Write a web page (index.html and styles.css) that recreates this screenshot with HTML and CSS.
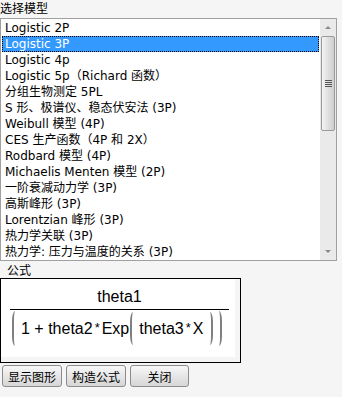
FILE: index.html
```html
<!DOCTYPE html>
<html lang="zh-CN">
<head>
  <meta charset="UTF-8">
  <title>选择模型</title>
  <link rel="stylesheet" href="styles.css">
</head>
<body>
  <div class="label">选择模型</div>
  <div class="listbox">
    <ul class="items">
      <li>Logistic 2P</li>
      <li class="selected">Logistic 3P</li>
      <li>Logistic 4p</li>
      <li>Logistic 5p（Richard 函数）</li>
      <li>分组生物测定 5PL</li>
      <li>S 形、极谱仪、稳态伏安法 (3P)</li>
      <li>Weibull 模型 (4P)</li>
      <li>CES 生产函数（4P 和 2X）</li>
      <li>Rodbard 模型 (4P)</li>
      <li>Michaelis Menten 模型 (2P)</li>
      <li>一阶衰减动力学 (3P)</li>
      <li>高斯峰形 (3P)</li>
      <li>Lorentzian 峰形 (3P)</li>
      <li>热力学关联 (3P)</li>
      <li>热力学: 压力与温度的关系 (3P)</li>
    </ul>
    <div class="scrollbar">
      <div class="arrow up"></div>
      <div class="thumb"><span class="grip"></span></div>
      <div class="track"></div>
      <div class="arrow down"></div>
    </div>
  </div>

  <div class="label formula-label">公式</div>
  <div class="formula-box">
    <div class="formula">
      <div class="numer">theta1</div>
      <div class="denom">
        <span class="paren open"></span>
        <span class="term first">1 + theta2<span class="op">*</span>Exp</span>
        <span class="paren open inner"></span>
        <span class="term second">theta3<span class="op">*</span>X</span>
        <span class="paren close inner"></span>
        <span class="paren close"></span>
      </div>
    </div>
  </div>

  <div class="buttons">
    <button>显示图形</button>
    <button>构造公式</button>
    <button class="wide">关闭</button>
  </div>
</body>
</html>
```

FILE: styles.css
```css
body {
  margin: 0;
  background-color: #f5f5f5;
  color: #000000;
  font-family: "DejaVu Sans", "Noto Sans CJK SC", sans-serif;
  font-size: 12px;
}
.label {
  height: 18px;
  line-height: 16px;
  font-family: "Noto Sans CJK SC", sans-serif;
}
.listbox {
  display: flex;
  width: 335px;
  height: 241px;
  border: 1px solid #a0a0a0;
  background-color: #ffffff;
}
.items {
  flex: 1;
  list-style: none;
  margin: 0;
  padding: 1px 1px 0 1px;
}
.items li {
  height: 16px;
  line-height: 16px;
  padding-left: 3px;
  white-space: nowrap;
}
.items li.selected {
  background-color: #3399ff;
  color: #ffffff;
  outline: 1px dotted #000000;
  outline-offset: -1px;
}
/* Scroll bar */
.scrollbar {
  width: 16px;
  display: flex;
  flex-direction: column;
  background-color: #eaeaea;
}
.arrow {
  height: 17px;
  position: relative;
}
.arrow::after {
  content: '';
  position: absolute;
  left: 5px;
  width: 0;
  height: 0;
  border-left: 3px solid transparent;
  border-right: 3px solid transparent;
}
.arrow.up::after {
  top: 7px;
  border-bottom: 3px solid #8a8a8a;
}
.arrow.down::after {
  top: 7px;
  border-top: 3px solid #8a8a8a;
}
.thumb {
  height: 93px;
  margin: 0 1px;
  border: 1px solid #9a9a9a;
  border-radius: 2px;
  background: linear-gradient(to right, #f4f4f4, #dcdcdc 60%, #cfcfcf);
  display: flex;
  align-items: center;
  justify-content: center;
}
.grip {
  width: 7px;
  height: 7px;
  background: repeating-linear-gradient(to bottom, #555555 0 1px, transparent 1px 2px);
}
.track {
  flex: 1;
}
/* Formula */
.formula-label {
  padding-left: 7px;
  height: 17px;
  line-height: 18px;
}
.formula-box {
  border: 1px solid #000000;
  padding: 0 5px 5px 0;
  width: 234px;
  height: 78px;
}
.formula {
  height: 78px;
  background-color: #ffffff;
  font-family: "Liberation Sans", sans-serif;
  font-size: 16px;
  padding: 0 6px 0 9px;
  box-sizing: border-box;
}
.numer {
  height: 31px;
  line-height: 24px;
  padding-top: 6px;
  box-sizing: border-box;
  text-align: center;
  border-bottom: 1px solid #000000;
}
.denom {
  display: flex;
  align-items: center;
  height: 37px;
  padding-left: 2px;
}
.term {
  white-space: nowrap;
}
.term.first {
  margin: 0 1px 0 4px;
}
.term.second {
  margin: 0 5px 0 4px;
}
.op {
  font-size: 13px;
  position: relative;
  top: -2px;
  margin: 0 2px;
}
.paren {
  width: 3px;
  height: 35px;
  border: 0 solid #808080;
}
.paren.inner {
  height: 33px;
}
.paren.open {
  border-left-width: 2px;
  border-radius: 3px 0 0 3px / 10px 0 0 10px;
}
.paren.close {
  border-right-width: 2px;
  border-radius: 0 3px 3px 0 / 0 10px 10px 0;
}
.paren.close.inner {
  margin-right: 4px;
}
/* Buttons */
.buttons {
  display: flex;
  gap: 4px;
  padding: 2px 0 0 2px;
}
.buttons button {
  width: 60px;
  height: 22px;
  padding: 0;
  border: 1px solid #8c8c8c;
  border-radius: 3px;
  background: linear-gradient(to bottom, #f8f8f8, #e6e6e6 50%, #d6d6d6);
  font-family: "Noto Sans CJK SC", sans-serif;
  font-size: 12px;
  color: #000000;
}
.buttons button.wide {
  width: 59px;
}
```
